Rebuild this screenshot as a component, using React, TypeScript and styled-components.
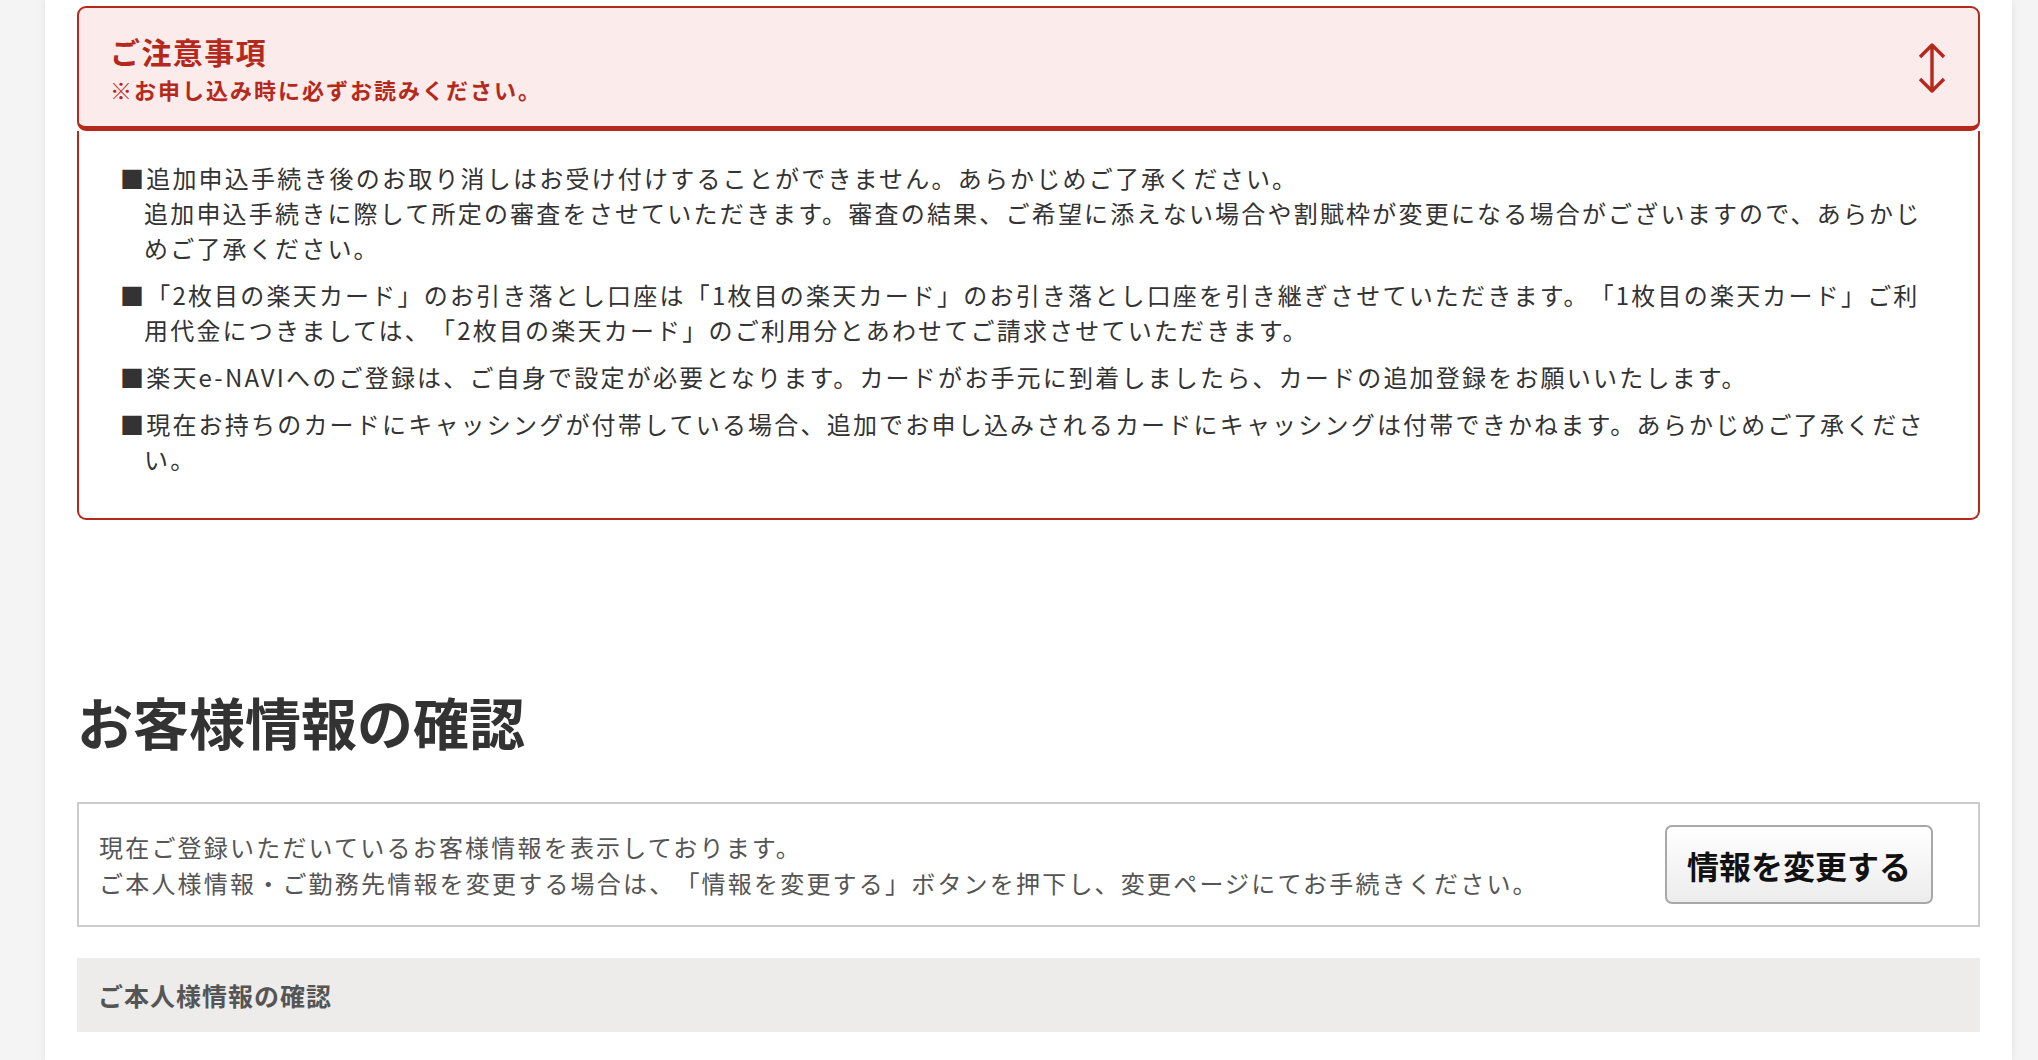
import React from "react";
import styled, { createGlobalStyle } from "styled-components";

const GlobalStyle = createGlobalStyle`
  html, body {
    margin: 0;
    padding: 0;
    background: #f4f4f4;
    overflow: hidden;
  }
  body {
    font-family: "Noto Sans CJK JP", "Noto Sans", sans-serif;
    color: #333;
    text-spacing-trim: space-all;
  }
`;

const Panel = styled.div`
  margin: 0 26px 0 45px;
  min-height: 100vh;
  padding: 6px 32px 0;
  box-sizing: border-box;
  background: #fff;
  box-shadow: 0 0 8px rgba(0, 0, 0, 0.08);
`;

const Notice = styled.section`
  display: flex;
  flex-direction: column;
`;

const NoticeHeader = styled.div`
  display: flex;
  align-items: center;
  justify-content: space-between;
  padding: 23px 31px 22px 31px;
  background: #fcebeb;
  border: 2px solid #b5291c;
  border-bottom-width: 5px;
  border-radius: 9px;
`;

const NoticeTitles = styled.div`
  display: flex;
  flex-direction: column;
  gap: 3px;
  color: #b5291c;
  font-weight: 700;
`;

const NoticeTitle = styled.div`
  font-size: 30px;
  line-height: 40px;
  letter-spacing: 1.4px;
`;

const NoticeSub = styled.div`
  font-size: 22px;
  line-height: 30px;
  letter-spacing: 2px;
`;

const NoticeBody = styled.ul`
  list-style: none;
  margin: 0;
  padding: 29px 43px 42px 41px;
  border: 2px solid #b5291c;
  border-top: 0;
  border-radius: 0 0 9px 9px;
  display: flex;
  flex-direction: column;
  gap: 12px;
`;

const NoticeItem = styled.li`
  font-size: 24px;
  line-height: 35px;
  letter-spacing: 2.2px;
  padding-left: 24px;
  text-indent: -24px;
  color: #333;
`;

const Heading = styled.h2`
  margin: 167px 0 0;
  font-size: 56px;
  line-height: 68px;
  font-weight: 700;
  color: #333;
`;

const InfoBox = styled.div`
  margin-top: 47px;
  height: 125px;
  box-sizing: border-box;
  border: 2px solid #cccccc;
  display: flex;
  align-items: center;
  justify-content: space-between;
  padding: 0 45px 0 20px;
`;

const InfoText = styled.p`
  margin: 0;
  font-size: 24px;
  line-height: 36px;
  letter-spacing: 2.2px;
  color: #555;
`;

const ChangeButton = styled.button`
  width: 268px;
  height: 79px;
  border: 2px solid #a8a8a8;
  border-radius: 7px;
  background: linear-gradient(#ffffff, #ececec);
  font-family: inherit;
  font-size: 32px;
  font-weight: 700;
  color: #111;
  letter-spacing: 0;
  cursor: pointer;
`;

const SubBar = styled.div`
  margin-top: 31px;
  height: 74px;
  background: #edecea;
  display: flex;
  align-items: center;
  padding-left: 21px;
  font-size: 25px;
  font-weight: 700;
  letter-spacing: 1px;
  color: #555;
`;

const ExpandIcon = () => (
  <svg width="30" height="52" viewBox="0 0 30 52" fill="none">
    <path
      d="M15 3 V49 M3 15 L15 3 L27 15 M3 37 L15 49 L27 37"
      stroke="#b5291c"
      strokeWidth="3.4"
      strokeLinejoin="round"
    />
  </svg>
);

const notices: React.ReactNode[] = [
  <>
    ■追加申込手続き後のお取り消しはお受け付けすることができません。あらかじめご了承ください。
    <br />
    追加申込手続きに際して所定の審査をさせていただきます。審査の結果、ご希望に添えない場合や割賦枠が変更になる場合がございますので、あらかじめご了承ください。
  </>,
  "■「2枚目の楽天カード」のお引き落とし口座は「1枚目の楽天カード」のお引き落とし口座を引き継ぎさせていただきます。「1枚目の楽天カード」ご利用代金につきましては、「2枚目の楽天カード」のご利用分とあわせてご請求させていただきます。",
  "■楽天e-NAVIへのご登録は、ご自身で設定が必要となります。カードがお手元に到着しましたら、カードの追加登録をお願いいたします。",
  "■現在お持ちのカードにキャッシングが付帯している場合、追加でお申し込みされるカードにキャッシングは付帯できかねます。あらかじめご了承ください。",
];

export default function App() {
  return (
    <>
      <GlobalStyle />
      <Panel>
        <Notice>
          <NoticeHeader>
            <NoticeTitles>
              <NoticeTitle>ご注意事項</NoticeTitle>
              <NoticeSub>※お申し込み時に必ずお読みください。</NoticeSub>
            </NoticeTitles>
            <ExpandIcon />
          </NoticeHeader>
          <NoticeBody>
            {notices.map((n, i) => (
              <NoticeItem key={i}>{n}</NoticeItem>
            ))}
          </NoticeBody>
        </Notice>

        <Heading>お客様情報の確認</Heading>
        <InfoBox>
          <InfoText>
            現在ご登録いただいているお客様情報を表示しております。
            <br />
            ご本人様情報・ご勤務先情報を変更する場合は、「情報を変更する」ボタンを押下し、変更ページにてお手続きください。
          </InfoText>
          <ChangeButton>情報を変更する</ChangeButton>
        </InfoBox>
        <SubBar>ご本人様情報の確認</SubBar>
      </Panel>
    </>
  );
}
